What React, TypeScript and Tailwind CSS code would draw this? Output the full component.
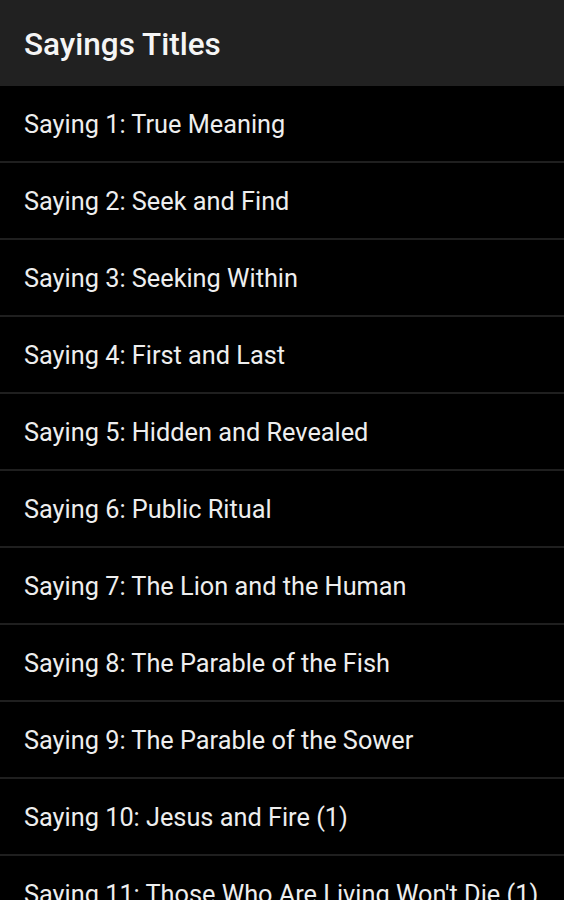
import React from "react";

const items = [
  "Saying 1: True Meaning",
  "Saying 2: Seek and Find",
  "Saying 3: Seeking Within",
  "Saying 4: First and Last",
  "Saying 5: Hidden and Revealed",
  "Saying 6: Public Ritual",
  "Saying 7: The Lion and the Human",
  "Saying 8: The Parable of the Fish",
  "Saying 9: The Parable of the Sower",
  "Saying 10: Jesus and Fire (1)",
  "Saying 11: Those Who Are Living Won't Die (1)",
  "Saying 12: Jesus and James",
];

export default function App() {
  return (
    <div className="w-[564px] h-[900px] overflow-hidden bg-black" style={{ fontFamily: "Roboto, 'Noto Sans', sans-serif" }}>
      <div className="h-[86px] bg-[#212121] flex items-center px-6 pt-[3px]">
        <h1 className="text-[31.5px] font-medium text-[#f5f5f5] leading-none">Sayings Titles</h1>
      </div>
      <div className="flex flex-col">
        {items.map((t) => (
          <div key={t} className="h-[77px] shrink-0 border-b-2 border-[#1f1f1f] flex items-center px-6 pt-[2px]">
            <span className="text-[25.3px] text-[#eeeeee] whitespace-nowrap leading-none">{t}</span>
          </div>
        ))}
      </div>
    </div>
  );
}
